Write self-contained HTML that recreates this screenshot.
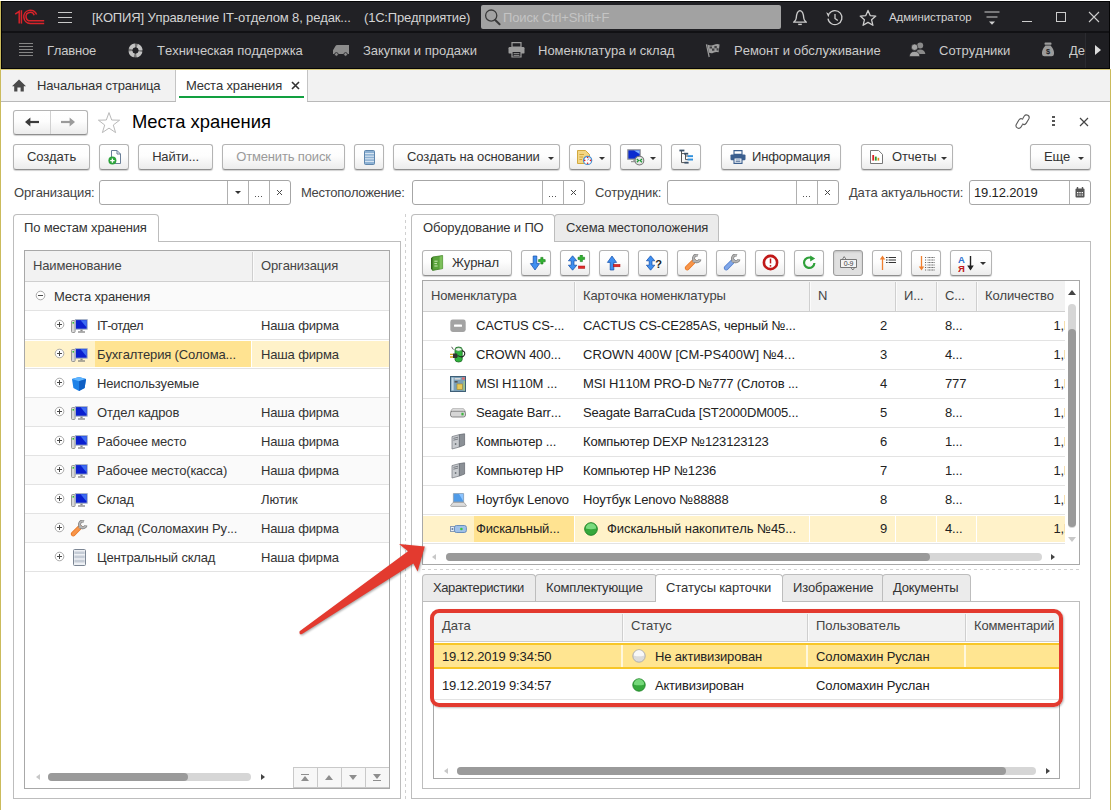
<!DOCTYPE html>
<html lang="ru"><head><meta charset="utf-8"><title>Места хранения</title>
<style>
html,body{margin:0;padding:0}
body{width:1112px;height:810px;position:relative;overflow:hidden;background:#fff;font:13px/1 "Liberation Sans",sans-serif;color:#333;font-kerning:none;letter-spacing:-.15px}
.a{position:absolute;white-space:nowrap}
.t{position:absolute;white-space:nowrap;line-height:16px;height:16px}
.b{position:absolute;box-sizing:border-box;height:26px;border:1px solid #b4b4b4;border-bottom-color:#8f8f8f;border-radius:3px;background:linear-gradient(#fff 0%,#fdfdfd 45%,#ececec 100%);box-shadow:0 1px 1px rgba(0,0,0,.18);text-align:center;line-height:24px;color:#333;white-space:nowrap}
.b.dis{color:#9a9a9a}
.b.on{background:#e0e0e0;border-color:#9c9c9c;box-shadow:inset 0 1px 2px rgba(0,0,0,.15)}
.b svg{position:absolute}
.in{position:absolute;box-sizing:border-box;height:25px;border:1px solid #a6a6a6;border-radius:3px;background:#fff}
.in i{position:absolute;top:0;bottom:0;width:1px;background:#bdbdbd}
.in span{position:absolute;top:0;line-height:23px;color:#555;text-align:center;width:20px;font-size:12px}
.dd{position:absolute;width:0;height:0;border-left:3px solid transparent;border-right:3px solid transparent;border-top:3px solid #333}
.hl{position:absolute;height:1px;background:#e3e3e3}
.vl{position:absolute;width:1px;background:#d0d0d0}
.tab{position:absolute;box-sizing:border-box;border:1px solid #bdbdbd;border-bottom:none;border-radius:4px 4px 0 0;background:#ebebeb;line-height:26px;height:27px;padding-left:10px;color:#333}
.tab.act{background:#fff;height:28px}
.pnl{position:absolute;box-sizing:border-box;border:1px solid #bdbdbd}
.hd{position:absolute;background:#f2f2f2}
.menu .t{color:#cbcbcb;letter-spacing:0}
</style></head><body>

<!-- window frame -->
<div class="a" style="left:0;top:1px;width:1px;height:809px;background:#cbbb5c"></div>
<div class="a" style="left:1110px;top:69px;width:1px;height:741px;background:#cbbb5c"></div>
<div class="a" style="left:0;top:69px;width:1111px;height:1px;background:#d6c877"></div>

<!-- title bar -->
<div class="a" style="left:1px;top:1px;width:1109px;height:68px;background:#050506"></div>
<div class="a" style="left:2px;top:2px;width:1107px;height:66px;background:#212125"></div>
<div class="a" style="left:2px;top:31px;width:1107px;height:2px;background:#111114"></div>

<!-- 1C logo -->
<svg class="a" style="left:14px;top:9px" width="31" height="16" viewBox="0 0 31 16">
 <g fill="none" stroke="#d8232a" stroke-width="1.5">
  <path d="M1.2 5.2 L5.2 2.4 V14.6"/>
  <path d="M7.4 1.2 V14.6"/>
  <path d="M22.6 5.6 A6.6 6.6 0 1 0 16.2 14.4 H30.2"/>
  <path d="M20.2 6.2 A4.2 4.2 0 1 0 16.2 11.8 H30.2"/>
 </g>
</svg>
<!-- hamburger -->
<div class="a" style="left:58px;top:12px;width:14px;height:1px;background:#c9c9c9;box-shadow:0 5px 0 #c9c9c9,0 10px 0 #c9c9c9"></div>
<div class="t" style="left:92px;top:10px;color:#d4d4d4">[КОПИЯ] Управление IT-отделом 8, редак...</div>
<div class="t" style="left:364px;top:10px;color:#d4d4d4;letter-spacing:-.2px">(1С:Предприятие)</div>
<!-- search -->
<div class="a" style="left:481px;top:5px;width:300px;height:24px;background:#a2a2a2;border-radius:2px"></div>
<svg class="a" style="left:484px;top:8px" width="18" height="18" viewBox="0 0 18 18"><circle cx="7.2" cy="7.6" r="5.6" fill="none" stroke="#3a3a3a" stroke-width="1.3"/><path d="M11.2 12 L15.6 16.2" stroke="#3a3a3a" stroke-width="2" stroke-linecap="round"/></svg>
<div class="t" style="left:503px;top:10px;color:#c4c4c4">Поиск Ctrl+Shift+F</div>
<!-- bell -->
<svg class="a" style="left:791px;top:9px" width="18" height="18" viewBox="0 0 18 18"><path d="M9 1.6 C5.6 2.2 5.4 6 5.2 9.2 C5 11.4 3.6 12.2 2.6 13.2 H15.4 C14.4 12.2 13 11.4 12.8 9.2 C12.6 6 12.4 2.2 9 1.6Z" fill="none" stroke="#cdcdcd" stroke-width="1.3" stroke-linejoin="round"/><path d="M7.2 15.4 H10.8" stroke="#cdcdcd" stroke-width="1.4"/></svg>
<!-- history -->
<svg class="a" style="left:825px;top:9px" width="19" height="18" viewBox="0 0 19 18"><path d="M4.2 4.6 A7 7 0 1 1 3 9.6" fill="none" stroke="#cdcdcd" stroke-width="1.3"/><path d="M1.2 3.2 L4.6 4.9 L3.4 8.2" fill="#cdcdcd" stroke="none"/><path d="M10 5 V9.4 L12.8 11.6" fill="none" stroke="#cdcdcd" stroke-width="1.3"/></svg>
<!-- star -->
<svg class="a" style="left:859px;top:9px" width="18" height="18" viewBox="0 0 18 18"><path d="M9 1.4 L11.2 6.6 L16.8 7.1 L12.6 10.8 L13.9 16.3 L9 13.4 L4.1 16.3 L5.4 10.8 L1.2 7.1 L6.8 6.6 Z" fill="none" stroke="#cdcdcd" stroke-width="1.3" stroke-linejoin="round"/></svg>
<div class="t" style="left:889px;top:9px;color:#d4d4d4;font-size:11.4px;letter-spacing:0">Администратор</div>
<!-- service menu -->
<svg class="a" style="left:984px;top:10px" width="16" height="16" viewBox="0 0 16 16"><path d="M0.5 2 H15.5 M2.5 7 H13.5" stroke="#cfcfcf" stroke-width="1.2"/><path d="M5 11.6 H11 L8 14.8Z" fill="#cfcfcf"/></svg>
<div class="a" style="left:1022px;top:21px;width:10px;height:1px;background:#cdcdcd"></div>
<div class="a" style="left:1056px;top:12px;width:8px;height:8px;border:1px solid #cdcdcd"></div>
<svg class="a" style="left:1088px;top:11px" width="12" height="12" viewBox="0 0 12 12"><path d="M1 1 L11 11 M11 1 L1 11" stroke="#cdcdcd" stroke-width="1.1"/></svg>


<div class="menu">
<!-- main list icon -->
<div class="a" style="left:19px;top:43px;width:14px;height:1px;background:#858585;box-shadow:0 3px 0 #858585,0 6px 0 #858585,0 9px 0 #858585,0 12px 0 #858585"></div>
<div class="t" style="left:47px;top:43px;letter-spacing:-.2px">Главное</div>
<!-- lifebuoy -->
<svg class="a" style="left:128px;top:43px" width="15" height="15" viewBox="0 0 15 15"><circle cx="7.5" cy="7.5" r="5.1" fill="none" stroke="#777" stroke-width="3.8"/><circle cx="7.5" cy="7.5" r="5.1" fill="none" stroke="#c2c2c2" stroke-width="3.8" stroke-dasharray="5.6 2.41" stroke-dashoffset="-1.2"/></svg>
<div class="t" style="left:157px;top:43px">Техническая поддержка</div>
<!-- truck -->
<svg class="a" style="left:332px;top:44px" width="18" height="13" viewBox="0 0 18 13"><path d="M5.5 1 H17 V10 H1 V6.2 L3.2 2.4 Q3.8 1 5.5 1Z" fill="#8c8c8c"/><circle cx="4.4" cy="10.4" r="1.8" fill="#8c8c8c" stroke="#202024" stroke-width=".8"/><circle cx="13.6" cy="10.4" r="1.8" fill="#8c8c8c" stroke="#202024" stroke-width=".8"/></svg>
<div class="t" style="left:363px;top:43px">Закупки и продажи</div>
<!-- printer -->
<svg class="a" style="left:508px;top:42px" width="17" height="16" viewBox="0 0 17 16"><path d="M4 0.6 H13 V5 H4Z" fill="none" stroke="#9c9c9c" stroke-width="1.2"/><rect x="0.5" y="5" width="16" height="6.6" rx="1.2" fill="#9c9c9c"/><path d="M4 9.4 H13 V15 H4Z" fill="#202024" stroke="#9c9c9c" stroke-width="1.2"/><path d="M5.6 11.6 H11.4 M5.6 13.4 H11.4" stroke="#9c9c9c" stroke-width=".9"/></svg>
<div class="t" style="left:538px;top:43px">Номенклатура и склад</div>
<!-- flag -->
<svg class="a" style="left:705px;top:43px" width="16" height="15" viewBox="0 0 16 15"><path d="M1.4 1.4 L4.2 14" stroke="#9c9c9c" stroke-width="1.2"/><path d="M2.4 1.6 Q6 3.4 9 1.8 T14.6 1.4 L13.6 9.2 Q10.6 8.6 8.4 9.8 T3.8 9.6Z" fill="#9c9c9c"/><path d="M4.6 3.4h2.4v2.2h-2.4z M9.4 3h2.4v2.2h-2.4z M7 5.6h2.4v2.2h-2.4z M11.6 5.2h2v2.2h-2z" fill="#202024" opacity=".75"/></svg>
<div class="t" style="left:734px;top:43px">Ремонт и обслуживание</div>
<!-- people -->
<svg class="a" style="left:909px;top:42px" width="17" height="15" viewBox="0 0 17 15"><circle cx="11.2" cy="3.4" r="3" fill="#8a8a8a"/><path d="M6.6 12 Q6.8 7.4 11.2 7.4 T16.4 12Z" fill="#8a8a8a"/><circle cx="5.6" cy="5.2" r="3.2" fill="#a4a4a4" stroke="#202024" stroke-width=".6"/><path d="M0.4 14.6 Q0.6 9.4 5.6 9.4 T10.8 14.6Z" fill="#a4a4a4" stroke="#202024" stroke-width=".6"/></svg>
<div class="t" style="left:939px;top:43px">Сотрудники</div>
<!-- money bag -->
<svg class="a" style="left:1041px;top:42px" width="14" height="15" viewBox="0 0 14 15"><rect x="3.6" y="0.6" width="6.8" height="2.2" rx=".6" fill="#9c9c9c"/><path d="M4.4 3.6 H9.6 Q13.4 8 13 12 Q12.8 14.2 10.6 14.2 H3.4 Q1.2 14.2 1 12 Q0.6 8 4.4 3.6Z" fill="#9c9c9c"/><text x="7" y="12.4" font-family="Liberation Sans,sans-serif" font-size="7.5" font-weight="bold" text-anchor="middle" fill="#202024">$</text></svg>
<div class="t" style="left:1069px;top:43px;width:17px;overflow:hidden">Де</div>
<div class="a" style="left:1085px;top:33px;width:23px;height:35px;background:#1e1e22;border-left:1px solid #2b2b30"></div>
<div class="a" style="left:1095px;top:45px;width:0;height:0;border-top:5px solid transparent;border-bottom:5px solid transparent;border-left:6px solid #dcdcdc"></div>
</div>


<!-- open-windows bar -->
<div class="a" style="left:1px;top:70px;width:1109px;height:31px;background:#f2f2f2"></div>
<div class="a" style="left:1px;top:101px;width:1109px;height:1px;background:#b9b9b9"></div>

<svg class="a" style="left:11px;top:78px" width="16" height="15" viewBox="0 0 16 15"><path d="M8 1.6 L15 8.2 H12.8 V13.6 H9.6 V9.6 H6.4 V13.6 H3.2 V8.2 H1Z" fill="#4a4a4a"/></svg>
<div class="t" style="left:37px;top:78px;color:#333;letter-spacing:-.15px">Начальная страница</div>
<div class="a" style="left:175px;top:70px;width:1px;height:31px;background:#c4c4c4"></div>
<div class="a" style="left:176px;top:70px;width:131px;height:32px;background:#fff"></div>
<div class="a" style="left:307px;top:70px;width:1px;height:31px;background:#c4c4c4"></div>
<div class="t" style="left:186px;top:78px;color:#333">Места хранения</div>
<svg class="a" style="left:291px;top:81px" width="9" height="9" viewBox="0 0 9 9"><path d="M1 1 L8 8 M8 1 L1 8" stroke="#333" stroke-width="1.6"/></svg>
<div class="a" style="left:179px;top:96px;width:125px;height:2px;background:#12a040"></div>



<!-- back / forward -->
<div class="b" style="left:13px;top:110px;width:75px;height:25px"></div>
<div class="a" style="left:50px;top:111px;width:1px;height:23px;background:#d0d0d0"></div>
<svg class="a" style="left:24px;top:116px" width="16" height="12" viewBox="0 0 16 12"><path d="M15 6 H4" stroke="#3a3a3a" stroke-width="2.2"/><path d="M1 6 L6.4 1.4 V10.6Z" fill="#3a3a3a"/></svg>
<svg class="a" style="left:60px;top:116px" width="16" height="12" viewBox="0 0 16 12"><path d="M1 6 H12" stroke="#9b9b9b" stroke-width="2.2"/><path d="M15 6 L9.6 1.4 V10.6Z" fill="#9b9b9b"/></svg>
<!-- favourite star -->
<svg class="a" style="left:97px;top:111px" width="24" height="23" viewBox="0 0 24 23"><path d="M12 1.6 L14.7 9 L22.6 9.2 L16.3 14 L18.6 21.6 L12 17.1 L5.4 21.6 L7.7 14 L1.4 9.2 L9.3 9Z" fill="#fff" stroke="#b9b9b9" stroke-width="1"/></svg>
<div class="a" style="left:132px;top:111px;font-size:18.4px;line-height:22px;color:#000;letter-spacing:0">Места хранения</div>
<!-- link -->
<svg class="a" style="left:1013px;top:112px" width="20" height="19" viewBox="0 0 20 19"><g transform="rotate(-14 9.6 9.6)" fill="none" stroke="#5a5a5a" stroke-width="1.1" stroke-linecap="round"><path d="M8.6 12.6 L6.6 14.6 A2.7 2.7 0 0 1 2.8 10.8 L6.4 7.2 A2.7 2.7 0 0 1 10.2 7.2"/><path d="M10.6 6.6 L12.6 4.6 A2.7 2.7 0 0 1 16.4 8.4 L12.8 12 A2.7 2.7 0 0 1 9 12"/></g></svg>
<div class="a" style="left:1052px;top:116px;width:3px;height:2px;background:#555;box-shadow:0 4px 0 #555,0 8px 0 #555"></div>
<svg class="a" style="left:1079px;top:117px" width="10" height="10" viewBox="0 0 10 10"><path d="M1 1 L9 9 M9 1 L1 9" stroke="#444" stroke-width="1.2"/></svg>


<div class="b" style="left:13px;top:144px;width:77px">Создать</div>
<div class="b" style="left:99px;top:144px;width:30px"><svg style="left:8px;top:5px" width="14" height="15" viewBox="0 0 14 15"><path d="M3.5 0.5 H9 L12.5 4 V13.5 H3.5Z" fill="#fff" stroke="#6a7f99" stroke-width="1"/><path d="M9 0.5 V4 H12.5" fill="none" stroke="#6a7f99" stroke-width="1"/><circle cx="4.4" cy="10.6" r="4" fill="#2ba33a"/><path d="M2.2 10.6 H6.6 M4.4 8.4 V12.8" stroke="#fff" stroke-width="1.4"/></svg></div>
<div class="b" style="left:138px;top:144px;width:75px">Найти...</div>
<div class="b dis" style="left:222px;top:144px;width:123px">Отменить поиск</div>
<div class="b" style="left:354px;top:144px;width:30px"><svg style="left:9px;top:5px" width="11" height="15" viewBox="0 0 11 15"><rect x="0.5" y="0.5" width="10" height="14" rx="1" fill="#8db1d3" stroke="#5f86ad"/><path d="M1 3.6 H10 M1 6.2 H10 M1 8.8 H10 M1 11.4 H10" stroke="#dfeaf5" stroke-width="1"/></svg></div>
<div class="b" style="left:393px;top:144px;width:167px;text-align:left;padding-left:13px">Создать на основании</div><div class="dd" style="left:548px;top:157px"></div>
<div class="b" style="left:569px;top:144px;width:42px"><svg style="left:7px;top:4px" width="18" height="17" viewBox="0 0 18 17"><path d="M0.5 1.5 H8.5 L12.5 5.5 V14.5 H0.5Z" fill="#f3d684" stroke="#d2a93f"/><path d="M2.4 5.5 H7 M2.4 8 H6 M2.4 10.5 H5" stroke="#c79a2f" stroke-width=".8"/><circle cx="10.6" cy="11.4" r="4.1" fill="#fff" stroke="#4a8fd0" stroke-width="1.2"/><g fill="#e02020"><circle cx="10.6" cy="8.5" r=".8"/><circle cx="10.6" cy="14.3" r=".8"/><circle cx="7.7" cy="11.4" r=".8"/><circle cx="13.5" cy="11.4" r=".8"/></g><path d="M10.6 11.4 L12 9.4" stroke="#5a8fd8" stroke-width=".9"/></svg></div><div class="dd" style="left:599px;top:157px"></div>
<div class="b" style="left:620px;top:144px;width:42px"><svg style="left:6px;top:4px" width="18" height="17" viewBox="0 0 18 17"><rect x="0.8" y="0.8" width="12.4" height="9.4" fill="#0b2bd0" stroke="#9a9a9a" stroke-width="1.2"/><path d="M7 1.4 H12.6 V5 Z" fill="#7fb1ff"/><path d="M4 12.6 H10 M7 10.4 V12.6" stroke="#9a9a9a" stroke-width="1.4"/><circle cx="12.4" cy="11.6" r="4.4" fill="#e6e6e6" stroke="#7a7a7a" stroke-width="1.1"/><path d="M9.8 10 L11.6 11.6 L9.8 13.2 M15 10 L13.2 11.6 L15 13.2" fill="none" stroke="#1f9a35" stroke-width="1.2"/></svg></div><div class="dd" style="left:650px;top:157px"></div>
<div class="b" style="left:671px;top:144px;width:30px"><svg style="left:7px;top:4px" width="15" height="16" viewBox="0 0 15 16"><path d="M2.5 2 V13.6 H6 M2.5 4.6 H6.5 V10.6 H9 M6.5 7 H9" fill="none" stroke="#555" stroke-width="1"/><rect x="0.4" y="0.6" width="5" height="1.8" fill="#3a5068"/><rect x="5" y="3.8" width="4.2" height="1.8" fill="#3a5068"/><rect x="8.6" y="6.2" width="5.4" height="1.9" fill="#2f8fdc"/><rect x="8.6" y="9.6" width="5.4" height="1.9" fill="#2f8fdc"/><rect x="5.4" y="12.8" width="4.2" height="1.8" fill="#3a5068"/></svg></div>
<div class="b" style="left:721px;top:144px;width:120px;text-align:left;padding-left:30px">Информация<svg style="left:8px;top:5px" width="16" height="14" viewBox="0 0 16 14"><path d="M4 0.6 H12 V4.4 H4Z" fill="#fff" stroke="#3b5f8f" stroke-width="1.1"/><rect x="0.5" y="4.4" width="15" height="5.8" rx="1.2" fill="#3b5f8f"/><path d="M4 8 H12 V13.4 H4Z" fill="#fff" stroke="#3b5f8f" stroke-width="1.1"/><path d="M5.6 10 H10.4 M5.6 11.6 H10.4" stroke="#3b5f8f" stroke-width=".8"/></svg></div>
<div class="b" style="left:861px;top:144px;width:92px;text-align:left;padding-left:30px">Отчеты<svg style="left:8px;top:5px" width="13" height="14" viewBox="0 0 13 14"><path d="M0.5 0.5 H8.6 L12.5 4.4 V13.5 H0.5Z" fill="#fff" stroke="#777"/><path d="M3.2 5 V10.6" stroke="#d22" stroke-width="1.8"/><path d="M5.8 6.6 V10.6" stroke="#2a9a2a" stroke-width="1.8"/><path d="M8.4 7.8 V10.6" stroke="#e08a1e" stroke-width="1.6"/></svg></div><div class="dd" style="left:941px;top:157px"></div>
<div class="b" style="left:1030px;top:144px;width:61px;text-align:left;padding-left:13px">Еще</div><div class="dd" style="left:1078px;top:157px"></div>


<div class="t" style="left:14px;top:185px;color:#444">Организация:</div>
<div class="in" style="left:99px;top:180px;width:192px"></div><div class="a" style="left:227px;top:181px;width:1px;height:23px;background:#b0b0b0"></div><div class="a" style="left:248px;top:181px;width:1px;height:23px;background:#b0b0b0"></div><div class="a" style="left:269px;top:181px;width:1px;height:23px;background:#b0b0b0"></div><div class="dd" style="left:235px;top:191px"></div><div class="a" style="left:255px;top:196px;width:1px;height:1px;background:#555;box-shadow:3px 0 0 #555,6px 0 0 #555"></div><svg class="a" style="left:276px;top:189px" width="7" height="7" viewBox="0 0 7 7"><path d="M1 1 L6 6 M6 1 L1 6" stroke="#4a4a4a" stroke-width="1"/></svg>
<div class="t" style="left:301px;top:185px;color:#444;letter-spacing:-.3px">Местоположение:</div>
<div class="in" style="left:412px;top:180px;width:173px"></div><div class="a" style="left:542px;top:181px;width:1px;height:23px;background:#b0b0b0"></div><div class="a" style="left:563px;top:181px;width:1px;height:23px;background:#b0b0b0"></div><div class="a" style="left:549px;top:196px;width:1px;height:1px;background:#555;box-shadow:3px 0 0 #555,6px 0 0 #555"></div><svg class="a" style="left:570px;top:189px" width="7" height="7" viewBox="0 0 7 7"><path d="M1 1 L6 6 M6 1 L1 6" stroke="#4a4a4a" stroke-width="1"/></svg>
<div class="t" style="left:595px;top:185px;color:#444">Сотрудник:</div>
<div class="in" style="left:667px;top:180px;width:172px"></div><div class="a" style="left:796px;top:181px;width:1px;height:23px;background:#b0b0b0"></div><div class="a" style="left:817px;top:181px;width:1px;height:23px;background:#b0b0b0"></div><div class="a" style="left:803px;top:196px;width:1px;height:1px;background:#555;box-shadow:3px 0 0 #555,6px 0 0 #555"></div><svg class="a" style="left:824px;top:189px" width="7" height="7" viewBox="0 0 7 7"><path d="M1 1 L6 6 M6 1 L1 6" stroke="#4a4a4a" stroke-width="1"/></svg>
<div class="t" style="left:849px;top:185px;color:#444;letter-spacing:-.18px">Дата актуальности:</div>
<div class="in" style="left:969px;top:180px;width:122px"></div><div class="a" style="left:1069px;top:181px;width:1px;height:23px;background:#b0b0b0"></div>
<div class="t" style="left:974px;top:185px;color:#222">19.12.2019</div>
<svg class="a" style="left:1075px;top:187px" width="10" height="11" viewBox="0 0 10 11"><rect x="0.5" y="1.5" width="9" height="9" rx="1" fill="#555"/><path d="M2.5 0 V2.4 M7.5 0 V2.4" stroke="#555" stroke-width="1.4"/><path d="M2 5 h1.4v1.2h-1.4z M4.3 5 h1.4v1.2h-1.4z M6.6 5 h1.4v1.2h-1.4z M2 7.4 h1.4v1.2h-1.4z M4.3 7.4 h1.4v1.2h-1.4z M6.6 7.4 h1.4v1.2h-1.4z" fill="#fff"/></svg>

<!-- LEFT-BEGIN -->
<div class="pnl" style="left:13px;top:241px;width:388px;height:558px"></div>
<div class="tab act" style="left:13px;top:214px;width:146px">По местам хранения</div>
<div class="pnl" style="left:24px;top:250px;width:366px;height:539px;border-color:#a8a8a8"></div>
<div class="hd" style="left:25px;top:251px;width:364px;height:30px"></div>
<div class="a" style="left:253px;top:252px;width:1px;height:29px;background:#fbfbfb"></div><div class="a" style="left:252px;top:252px;width:1px;height:29px;background:#cfcfcf"></div>
<div class="hl" style="left:25px;top:281px;width:364px;background:#cfcfcf"></div>
<div class="t" style="left:33px;top:258px;color:#444">Наименование</div>
<div class="t" style="left:261px;top:258px;color:#444">Организация</div>
<div class="a" style="left:25px;top:282px;width:364px;height:28px;background:#fafafa"></div>
<div class="hl" style="left:25px;top:310px;width:364px"></div>
<svg class="a" style="left:35px;top:290px" width="11" height="11" viewBox="0 0 11 11"><circle cx="5.5" cy="5.5" r="4.3" fill="#fff" stroke="#a0a0a0" stroke-width=".9"/><path d="M3 5.5 H8" stroke="#4a4a4a" stroke-width="1"/></svg>
<div class="t" style="left:54px;top:289px">Места хранения</div>
<div class="hl" style="left:25px;top:339px;width:364px"></div>
<svg class="a" style="left:54px;top:319px" width="11" height="11" viewBox="0 0 11 11"><circle cx="5.5" cy="5.5" r="4.3" fill="#fff" stroke="#a0a0a0" stroke-width=".9"/><path d="M3 5.5 H8 M5.5 3 V8" stroke="#4a4a4a" stroke-width="1"/></svg>
<svg class="a" style="left:71px;top:319px" width="17" height="15" viewBox="0 0 17 15"><rect x="0.5" y="1.5" width="3.6" height="12" rx="1" fill="#d9d9d9" stroke="#8c8c8c" stroke-width=".9"/><rect x="1.6" y="3" width="1.3" height="1.6" fill="#20c020"/><rect x="4.4" y="0.6" width="11.8" height="9.6" fill="#0a1fcf" stroke="#a9b4c4" stroke-width="1"/><path d="M9.6 1.2 H15.6 V8.6Z" fill="#3d6cf2"/><path d="M9.4 10.6 H11.6 V12.2 H9.4Z" fill="#8a8a8a"/><path d="M7 12.4 H14 V13.6 H7Z" fill="#7a7a7a"/></svg>
<div class="t" style="left:97px;top:318px;letter-spacing:-.7px">IT-отдел</div>
<div class="t" style="left:261px;top:318px">Наша фирма</div>
<div class="a" style="left:25px;top:341px;width:364px;height:26px;background:#fff2c9"></div>
<div class="a" style="left:95px;top:341px;width:156px;height:26px;background:#ffe391"></div>
<div class="a" style="left:251px;top:341px;width:1px;height:26px;background:#fff"></div>
<div class="hl" style="left:25px;top:368px;width:364px"></div>
<svg class="a" style="left:54px;top:348px" width="11" height="11" viewBox="0 0 11 11"><circle cx="5.5" cy="5.5" r="4.3" fill="#fff" stroke="#a0a0a0" stroke-width=".9"/><path d="M3 5.5 H8 M5.5 3 V8" stroke="#4a4a4a" stroke-width="1"/></svg>
<svg class="a" style="left:71px;top:348px" width="17" height="15" viewBox="0 0 17 15"><rect x="0.5" y="1.5" width="3.6" height="12" rx="1" fill="#d9d9d9" stroke="#8c8c8c" stroke-width=".9"/><rect x="1.6" y="3" width="1.3" height="1.6" fill="#20c020"/><rect x="4.4" y="0.6" width="11.8" height="9.6" fill="#0a1fcf" stroke="#a9b4c4" stroke-width="1"/><path d="M9.6 1.2 H15.6 V8.6Z" fill="#3d6cf2"/><path d="M9.4 10.6 H11.6 V12.2 H9.4Z" fill="#8a8a8a"/><path d="M7 12.4 H14 V13.6 H7Z" fill="#7a7a7a"/></svg>
<div class="t" style="left:97px;top:347px">Бухгалтерия (Солома...</div>
<div class="t" style="left:261px;top:347px">Наша фирма</div>
<div class="hl" style="left:25px;top:397px;width:364px"></div>
<svg class="a" style="left:54px;top:377px" width="11" height="11" viewBox="0 0 11 11"><circle cx="5.5" cy="5.5" r="4.3" fill="#fff" stroke="#a0a0a0" stroke-width=".9"/><path d="M3 5.5 H8 M5.5 3 V8" stroke="#4a4a4a" stroke-width="1"/></svg>
<svg class="a" style="left:71px;top:376px" width="16" height="16" viewBox="0 0 16 16"><path d="M1 3 L8 1 L15 3 L13.6 12 L8 15 L2.4 12Z" fill="#1e82e8"/><path d="M1 3 L8 1 L15 3 L8 5.2Z" fill="#5fb4ff"/><path d="M8 5.2 L15 3 L13.6 12 L8 15Z" fill="#0f5fc4"/></svg>
<div class="t" style="left:97px;top:376px">Неиспользуемые</div>
<div class="a" style="left:25px;top:398px;width:364px;height:28px;background:#fafafa"></div>
<div class="hl" style="left:25px;top:426px;width:364px"></div>
<svg class="a" style="left:54px;top:406px" width="11" height="11" viewBox="0 0 11 11"><circle cx="5.5" cy="5.5" r="4.3" fill="#fff" stroke="#a0a0a0" stroke-width=".9"/><path d="M3 5.5 H8 M5.5 3 V8" stroke="#4a4a4a" stroke-width="1"/></svg>
<svg class="a" style="left:71px;top:406px" width="17" height="15" viewBox="0 0 17 15"><rect x="0.5" y="1.5" width="3.6" height="12" rx="1" fill="#d9d9d9" stroke="#8c8c8c" stroke-width=".9"/><rect x="1.6" y="3" width="1.3" height="1.6" fill="#20c020"/><rect x="4.4" y="0.6" width="11.8" height="9.6" fill="#0a1fcf" stroke="#a9b4c4" stroke-width="1"/><path d="M9.6 1.2 H15.6 V8.6Z" fill="#3d6cf2"/><path d="M9.4 10.6 H11.6 V12.2 H9.4Z" fill="#8a8a8a"/><path d="M7 12.4 H14 V13.6 H7Z" fill="#7a7a7a"/></svg>
<div class="t" style="left:97px;top:405px">Отдел кадров</div>
<div class="t" style="left:261px;top:405px">Наша фирма</div>
<div class="hl" style="left:25px;top:455px;width:364px"></div>
<svg class="a" style="left:54px;top:435px" width="11" height="11" viewBox="0 0 11 11"><circle cx="5.5" cy="5.5" r="4.3" fill="#fff" stroke="#a0a0a0" stroke-width=".9"/><path d="M3 5.5 H8 M5.5 3 V8" stroke="#4a4a4a" stroke-width="1"/></svg>
<svg class="a" style="left:71px;top:435px" width="17" height="15" viewBox="0 0 17 15"><rect x="0.5" y="1.5" width="3.6" height="12" rx="1" fill="#d9d9d9" stroke="#8c8c8c" stroke-width=".9"/><rect x="1.6" y="3" width="1.3" height="1.6" fill="#20c020"/><rect x="4.4" y="0.6" width="11.8" height="9.6" fill="#0a1fcf" stroke="#a9b4c4" stroke-width="1"/><path d="M9.6 1.2 H15.6 V8.6Z" fill="#3d6cf2"/><path d="M9.4 10.6 H11.6 V12.2 H9.4Z" fill="#8a8a8a"/><path d="M7 12.4 H14 V13.6 H7Z" fill="#7a7a7a"/></svg>
<div class="t" style="left:97px;top:434px">Рабочее место</div>
<div class="t" style="left:261px;top:434px">Наша фирма</div>
<div class="a" style="left:25px;top:456px;width:364px;height:28px;background:#fafafa"></div>
<div class="hl" style="left:25px;top:484px;width:364px"></div>
<svg class="a" style="left:54px;top:464px" width="11" height="11" viewBox="0 0 11 11"><circle cx="5.5" cy="5.5" r="4.3" fill="#fff" stroke="#a0a0a0" stroke-width=".9"/><path d="M3 5.5 H8 M5.5 3 V8" stroke="#4a4a4a" stroke-width="1"/></svg>
<svg class="a" style="left:71px;top:464px" width="17" height="15" viewBox="0 0 17 15"><rect x="0.5" y="1.5" width="3.6" height="12" rx="1" fill="#d9d9d9" stroke="#8c8c8c" stroke-width=".9"/><rect x="1.6" y="3" width="1.3" height="1.6" fill="#20c020"/><rect x="4.4" y="0.6" width="11.8" height="9.6" fill="#0a1fcf" stroke="#a9b4c4" stroke-width="1"/><path d="M9.6 1.2 H15.6 V8.6Z" fill="#3d6cf2"/><path d="M9.4 10.6 H11.6 V12.2 H9.4Z" fill="#8a8a8a"/><path d="M7 12.4 H14 V13.6 H7Z" fill="#7a7a7a"/></svg>
<div class="t" style="left:97px;top:463px">Рабочее место(касса)</div>
<div class="t" style="left:261px;top:463px">Наша фирма</div>
<div class="hl" style="left:25px;top:513px;width:364px"></div>
<svg class="a" style="left:54px;top:493px" width="11" height="11" viewBox="0 0 11 11"><circle cx="5.5" cy="5.5" r="4.3" fill="#fff" stroke="#a0a0a0" stroke-width=".9"/><path d="M3 5.5 H8 M5.5 3 V8" stroke="#4a4a4a" stroke-width="1"/></svg>
<svg class="a" style="left:71px;top:493px" width="17" height="15" viewBox="0 0 17 15"><rect x="0.5" y="1.5" width="3.6" height="12" rx="1" fill="#d9d9d9" stroke="#8c8c8c" stroke-width=".9"/><rect x="1.6" y="3" width="1.3" height="1.6" fill="#20c020"/><rect x="4.4" y="0.6" width="11.8" height="9.6" fill="#0a1fcf" stroke="#a9b4c4" stroke-width="1"/><path d="M9.6 1.2 H15.6 V8.6Z" fill="#3d6cf2"/><path d="M9.4 10.6 H11.6 V12.2 H9.4Z" fill="#8a8a8a"/><path d="M7 12.4 H14 V13.6 H7Z" fill="#7a7a7a"/></svg>
<div class="t" style="left:97px;top:492px">Склад</div>
<div class="t" style="left:261px;top:492px">Лютик</div>
<div class="a" style="left:25px;top:514px;width:364px;height:28px;background:#fafafa"></div>
<div class="hl" style="left:25px;top:542px;width:364px"></div>
<svg class="a" style="left:54px;top:522px" width="11" height="11" viewBox="0 0 11 11"><circle cx="5.5" cy="5.5" r="4.3" fill="#fff" stroke="#a0a0a0" stroke-width=".9"/><path d="M3 5.5 H8 M5.5 3 V8" stroke="#4a4a4a" stroke-width="1"/></svg>
<svg class="a" style="left:70px;top:520px" width="18" height="17" viewBox="0 0 18 17"><path d="M3.2 14 L10 7.2" stroke="#e8741e" stroke-width="4.6" stroke-linecap="round"/><path d="M3.2 14 L10 7.2" stroke="#f7954a" stroke-width="3.2" stroke-linecap="round"/><path d="M9.2 8 L11.4 5.8" stroke="#8a8a8a" stroke-width="3"/><path d="M13.9 1.3 A3.3 3.3 0 1 0 16 5.3" fill="none" stroke="#7d7d7d" stroke-width="3"/><path d="M13.9 1.3 A3.3 3.3 0 1 0 16 5.3" fill="none" stroke="#b4b4b4" stroke-width="1.7"/><path d="M9.4 7.8 L11.2 6" stroke="#b4b4b4" stroke-width="1.7"/></svg>
<div class="t" style="left:97px;top:521px">Склад (Соломахин Ру...</div>
<div class="t" style="left:261px;top:521px">Наша фирма</div>
<div class="hl" style="left:25px;top:571px;width:364px"></div>
<svg class="a" style="left:54px;top:551px" width="11" height="11" viewBox="0 0 11 11"><circle cx="5.5" cy="5.5" r="4.3" fill="#fff" stroke="#a0a0a0" stroke-width=".9"/><path d="M3 5.5 H8 M5.5 3 V8" stroke="#4a4a4a" stroke-width="1"/></svg>
<svg class="a" style="left:73px;top:549px" width="13" height="17" viewBox="0 0 13 17"><rect x="0.5" y="0.5" width="12" height="16" rx="1" fill="#eef1f5" stroke="#7c8694"/><path d="M1.4 2.4 H11.6 V5 H1.4Z M1.4 6.6 H11.6 V9.2 H1.4Z M1.4 10.8 H11.6 V13.4 H1.4Z" fill="#c5ccd6"/></svg>
<div class="t" style="left:97px;top:550px">Центральный склад</div>
<div class="t" style="left:261px;top:550px">Наша фирма</div>
<div class="a" style="left:36px;top:774px;width:0;height:0;border-top:3px solid transparent;border-bottom:3px solid transparent;border-right:4px solid #c8c8c8"></div>
<div class="a" style="left:48px;top:773px;width:203px;height:8px;border-radius:4px;background:#d6d6d6"></div>
<div class="a" style="left:48px;top:773px;width:140px;height:8px;border-radius:4px;background:#9a9a9a"></div>
<div class="a" style="left:261px;top:774px;width:0;height:0;border-top:3px solid transparent;border-bottom:3px solid transparent;border-left:4px solid #444"></div>
<div class="a" style="left:293px;top:767px;width:24px;height:21px;box-sizing:border-box;border:1px solid #c9c9c9;border-right:none;background:#f7f7f7"></div>
<div class="a" style="left:317px;top:767px;width:24px;height:21px;box-sizing:border-box;border:1px solid #c9c9c9;border-right:none;background:#f7f7f7"></div>
<div class="a" style="left:341px;top:767px;width:24px;height:21px;box-sizing:border-box;border:1px solid #c9c9c9;border-right:none;background:#f7f7f7"></div>
<div class="a" style="left:365px;top:767px;width:24px;height:21px;box-sizing:border-box;border:1px solid #c9c9c9;border-right:none;background:#f7f7f7"></div>
<div class="a" style="left:301px;top:774px;width:8px;height:1px;background:#8e8e8e"></div><div class="a" style="left:301px;top:776px;width:0;height:0;border-left:4px solid transparent;border-right:4px solid transparent;border-bottom:5px solid #8e8e8e"></div>
<div class="a" style="left:325px;top:775px;width:0;height:0;border-left:4px solid transparent;border-right:4px solid transparent;border-bottom:5px solid #8e8e8e"></div>
<div class="a" style="left:349px;top:775px;width:0;height:0;border-left:4px solid transparent;border-right:4px solid transparent;border-top:5px solid #8e8e8e"></div>
<div class="a" style="left:373px;top:774px;width:0;height:0;border-left:4px solid transparent;border-right:4px solid transparent;border-top:5px solid #8e8e8e"></div><div class="a" style="left:373px;top:780px;width:8px;height:1px;background:#8e8e8e"></div>
<!-- LEFT-END -->
<!-- RIGHT-BEGIN -->
<div class="pnl" style="left:411px;top:241px;width:680px;height:558px"></div>
<div class="tab" style="left:554px;top:214px;width:165px;padding-left:11px">Схема местоположения</div>
<div class="tab act" style="left:411px;top:214px;width:144px;padding-left:11px">Оборудование и ПО</div>
<div class="a" style="left:405px;top:214px;width:1px;height:585px;background:repeating-linear-gradient(180deg,#d0d0d0 0 3px,transparent 3px 6px)"></div>
<div class="b" style="left:422px;top:250px;width:90px;text-align:left;padding-left:29px">Журнал<svg style="left:7px;top:4px" width="15" height="16" viewBox="0 0 15 16"><path d="M2.6 2 L12.6 0.6 V13.6 L2.6 15.4Z" fill="#5aa43a" stroke="#3d7f22" stroke-width=".8"/><path d="M1 3 L2.6 2 V15.4 L1 14Z" fill="#2f6a18"/><path d="M4.4 6.2 H7.6 M4.4 8.6 H7 M4.4 11 H7.6" stroke="#d6f0c4" stroke-width=".9"/><path d="M9.6 1.4 L12.6 0.9 V13.4 L9.6 13.9Z" fill="#8ccc6a" opacity=".7"/></svg></div>
<div class="b " style="left:521px;top:250px;width:30px"><svg style="left:7px;top:4px" width="19" height="16" viewBox="0 0 19 16"><path d="M4.2 1 H7.8 V8.6 H10.6 L6 15 L1.4 8.6 H4.2Z" fill="#3f8ff0" stroke="#0f4aa8" stroke-width=".7"/><path d="M9.6 4.6h2.2v-2.2h2.2v2.2h2.2v2.2h-2.2v2.2h-2.2v-2.2h-2.2z" fill="#32b432" stroke="#1a7a1a" stroke-width=".6"/></svg></div>
<div class="b " style="left:560px;top:250px;width:30px"><svg style="left:6px;top:4px" width="20" height="17" viewBox="0 0 20 17"><path d="M4.2 5.8 H1.4 L5.6 0.8 L9.8 5.8 H7 V10.2 H9.8 L5.6 15.2 L1.4 10.2 H4.2Z" fill="#3f8ff0" stroke="#0f4aa8" stroke-width=".7"/><path d="M11 2.2h2.2v-2.2h2.2v2.2h2.2v2.2h-2.2v2.2h-2.2v-2.2h-2.2z" fill="#32b432" stroke="#1a7a1a" stroke-width=".6"/><rect x="11.4" y="11" width="6.4" height="2.4" fill="#e02a2a" stroke="#a81010" stroke-width=".5"/></svg></div>
<div class="b " style="left:599px;top:250px;width:30px"><svg style="left:6px;top:4px" width="16" height="16" viewBox="0 0 16 16"><path d="M4.2 15 H7.8 V7.4 H10.6 L6 1 L1.4 7.4 H4.2Z" fill="#3f8ff0" stroke="#0f4aa8" stroke-width=".7"/><rect x="7.6" y="9.4" width="6.4" height="2.4" fill="#e02a2a" stroke="#a81010" stroke-width=".5"/></svg></div>
<div class="b " style="left:638px;top:250px;width:30px"><svg style="left:6px;top:4px" width="17" height="16" viewBox="0 0 17 16"><path d="M4.2 5.8 H1.4 L5.6 0.8 L9.8 5.8 H7 V10.2 H9.8 L5.6 15.2 L1.4 10.2 H4.2Z" fill="#3f8ff0" stroke="#0f4aa8" stroke-width=".7"/><text x="13.6" y="13.4" font-family="Liberation Sans,sans-serif" font-size="11" font-weight="bold" text-anchor="middle" fill="#222">?</text></svg></div>
<div class="b " style="left:677px;top:250px;width:30px"><svg style="left:6px;top:3px" width="18" height="17" viewBox="0 0 18 17"><path d="M3.2 14 L10 7.2" stroke="#e8741e" stroke-width="4.6" stroke-linecap="round"/><path d="M3.2 14 L10 7.2" stroke="#f7954a" stroke-width="3.2" stroke-linecap="round"/><path d="M9.2 8 L11.4 5.8" stroke="#8a8a8a" stroke-width="3"/><path d="M13.9 1.3 A3.3 3.3 0 1 0 16 5.3" fill="none" stroke="#7d7d7d" stroke-width="3"/><path d="M13.9 1.3 A3.3 3.3 0 1 0 16 5.3" fill="none" stroke="#b4b4b4" stroke-width="1.7"/><path d="M9.4 7.8 L11.2 6" stroke="#b4b4b4" stroke-width="1.7"/></svg></div>
<div class="b " style="left:716px;top:250px;width:30px"><svg style="left:6px;top:3px" width="18" height="17" viewBox="0 0 18 17"><path d="M3.2 14 L10 7.2" stroke="#4f7ccc" stroke-width="4.6" stroke-linecap="round"/><path d="M3.2 14 L10 7.2" stroke="#7fa6e8" stroke-width="3.2" stroke-linecap="round"/><path d="M9.2 8 L11.4 5.8" stroke="#8a8a8a" stroke-width="3"/><path d="M13.9 1.3 A3.3 3.3 0 1 0 16 5.3" fill="none" stroke="#7d7d7d" stroke-width="3"/><path d="M13.9 1.3 A3.3 3.3 0 1 0 16 5.3" fill="none" stroke="#b4b4b4" stroke-width="1.7"/><path d="M9.4 7.8 L11.2 6" stroke="#b4b4b4" stroke-width="1.7"/></svg></div>
<div class="b " style="left:755px;top:250px;width:30px"><svg style="left:6px;top:3px" width="17" height="17" viewBox="0 0 17 17"><circle cx="8.5" cy="8.5" r="6.6" fill="#fff" stroke="#c01818" stroke-width="2.6"/><path d="M8.5 4.6 V9.4" stroke="#c01818" stroke-width="1.5"/><circle cx="8.5" cy="11.8" r=".9" fill="#c01818"/></svg></div>
<div class="b " style="left:794px;top:250px;width:30px"><svg style="left:7px;top:4px" width="15" height="15" viewBox="0 0 15 15"><path d="M12.4 8 A5.2 5.2 0 1 1 9.4 3" fill="none" stroke="#2fa03a" stroke-width="2.2"/><path d="M8.2 0.4 L13.2 3.6 L8.2 6.6Z" fill="#2fa03a"/></svg></div>
<div class="b on" style="left:833px;top:250px;width:30px"><svg style="left:5px;top:4px" width="19" height="16" viewBox="0 0 19 16"><path d="M1.5 4.5 H17.5 V12.5 H1.5Z M3.4 4.4 L5.2 1.6 L7 4.4 M12 12.6 L13.8 15 L15.6 12.6" fill="#f4f4f4" stroke="#6a6a6a" stroke-width=".9"/><text x="9.5" y="11.2" font-family="Liberation Sans,sans-serif" font-size="7" text-anchor="middle" fill="#444">0-9</text></svg></div>
<div class="b " style="left:872px;top:250px;width:30px"><svg style="left:6px;top:4px" width="18" height="16" viewBox="0 0 18 16"><path d="M3.5 15 V3" stroke="#f08030" stroke-width="1.3"/><path d="M0.8 4.6 L3.5 0.6 L6.2 4.6Z" fill="#f08030"/><path d="M7 2.5 h1.6 M9.6 2.5 H17 M7 5 h1.6 M9.6 5 H17 M7 7.5 h1.6 M9.6 7.5 H17" stroke="#333" stroke-width="1"/></svg></div>
<div class="b " style="left:911px;top:250px;width:30px"><svg style="left:6px;top:4px" width="18" height="16" viewBox="0 0 18 16"><path d="M3.5 1 V13" stroke="#f08030" stroke-width="1.3"/><path d="M0.8 11.4 L3.5 15.4 L6.2 11.4Z" fill="#f08030"/><path d="M7 2.5 h1.6 M9.6 2.5 H17 M7 5 h1.6 M9.6 5 H17 M7 7.5 h1.6 M9.6 7.5 H17 M7 10 h1.6 M9.6 10 H17 M7 12.5 h1.6 M9.6 12.5 H17 M7 15 h1.6 M9.6 15 H17" stroke="#555" stroke-width=".9" stroke-dasharray="1 .5"/></svg></div>
<div class="b " style="left:950px;top:250px;width:42px"><svg style="left:7px;top:3px" width="20" height="19" viewBox="0 0 20 19"><text x="0" y="8.6" font-family="Liberation Sans,sans-serif" font-size="9.5" font-weight="bold" fill="#2a6fd0">А</text><text x="0" y="17.6" font-family="Liberation Sans,sans-serif" font-size="9.5" font-weight="bold" fill="#c01818">Я</text><path d="M12.5 2 V15" stroke="#222" stroke-width="1.4"/><path d="M9.2 11.6 L12.5 16.4 L15.8 11.6Z" fill="#222"/></svg></div>
<div class="dd" style="left:980px;top:262px"></div>
<div class="pnl" style="left:422px;top:280px;width:658px;height:285px;border-color:#a8a8a8"></div>
<div class="hd" style="left:423px;top:281px;width:642px;height:30px"></div>
<div class="hl" style="left:423px;top:311px;width:642px;background:#cfcfcf"></div>
<div class="a" style="left:575px;top:282px;width:1px;height:29px;background:#fbfbfb"></div><div class="a" style="left:574px;top:282px;width:1px;height:29px;background:#cfcfcf"></div>
<div class="a" style="left:810px;top:282px;width:1px;height:29px;background:#fbfbfb"></div><div class="a" style="left:809px;top:282px;width:1px;height:29px;background:#cfcfcf"></div>
<div class="a" style="left:896px;top:282px;width:1px;height:29px;background:#fbfbfb"></div><div class="a" style="left:895px;top:282px;width:1px;height:29px;background:#cfcfcf"></div>
<div class="a" style="left:937px;top:282px;width:1px;height:29px;background:#fbfbfb"></div><div class="a" style="left:936px;top:282px;width:1px;height:29px;background:#cfcfcf"></div>
<div class="a" style="left:977px;top:282px;width:1px;height:29px;background:#fbfbfb"></div><div class="a" style="left:976px;top:282px;width:1px;height:29px;background:#cfcfcf"></div>
<div class="t" style="left:431px;top:288px;color:#444">Номенклатура</div>
<div class="t" style="left:583px;top:288px;color:#444">Карточка номенклатуры</div>
<div class="t" style="left:818px;top:288px;color:#444">N</div>
<div class="t" style="left:904px;top:288px;color:#444">И...</div>
<div class="t" style="left:945px;top:288px;color:#444">С...</div>
<div class="t" style="left:985px;top:288px;color:#444">Количество</div>
<div class="hl" style="left:423px;top:340px;width:642px"></div>
<svg class="a" style="left:450px;top:319px" width="16" height="14" viewBox="0 0 16 14"><rect x="0.3" y="0.6" width="15.4" height="12.4" rx="2.4" fill="#a3a3a3"/><rect x="4" y="5.6" width="8" height="2.2" rx=".6" fill="#fff"/></svg>
<div class="t" style="left:476px;top:318px;color:#222">CACTUS CS-...</div>
<div class="t" style="left:583px;top:318px;color:#222">CACTUS CS-CE285AS, черный №...</div>
<div class="t" style="left:860px;width:27px;text-align:right;top:318px;color:#222">2</div>
<div class="t" style="left:945px;top:318px;color:#222">8...</div>
<div class="t" style="left:1041px;width:23px;text-align:right;top:318px;color:#222">1,</div>
<div class="a" style="left:1064px;top:321px;width:1px;height:9px;background:#f6dfae"></div>
<div class="hl" style="left:423px;top:369px;width:642px"></div>
<svg class="a" style="left:449px;top:346px" width="18" height="17" viewBox="0 0 18 17"><path d="M6 3.4 Q6 1 9.6 1 T13.2 3.4 V13.6 Q13.2 16 9.6 16 T6 13.6Z" fill="#2fb43c" stroke="#1a6a22" stroke-width=".8"/><ellipse cx="9.6" cy="3.4" rx="3.2" ry="1.8" fill="#eef7ee" stroke="#1a6a22" stroke-width=".6"/><path d="M1 8.4 H4 M1 11 H4" stroke="#d9a520" stroke-width="1.3"/><path d="M4 7.4 H8 Q9.6 9.7 8 12 H4Z" fill="#333"/><path d="M9 9.6 Q14 12.6 15.6 8.6 Q16.4 5.4 13 4.6" fill="none" stroke="#222" stroke-width="1.1"/><path d="M2.6 0.8 L4.4 3.6" stroke="#333" stroke-width=".8"/></svg>
<div class="t" style="left:476px;top:347px;color:#222">CROWN 400...</div>
<div class="t" style="left:583px;top:347px;color:#222;letter-spacing:.06px">CROWN 400W [CM-PS400W] №4...</div>
<div class="t" style="left:860px;width:27px;text-align:right;top:347px;color:#222">3</div>
<div class="t" style="left:945px;top:347px;color:#222">4...</div>
<div class="t" style="left:1041px;width:23px;text-align:right;top:347px;color:#222">1,</div>
<div class="a" style="left:1064px;top:350px;width:1px;height:9px;background:#f6dfae"></div>
<div class="hl" style="left:423px;top:398px;width:642px"></div>
<svg class="a" style="left:450px;top:376px" width="16" height="16" viewBox="0 0 16 16"><rect x="0.5" y="0.5" width="15" height="15" fill="#7aa0b8" stroke="#3f5f78"/><rect x="1.6" y="1.6" width="2" height="12.8" fill="#c9dbe6"/><rect x="7" y="8" width="5.4" height="5.4" fill="#e8c95a" stroke="#a98a1e" stroke-width=".6"/><rect x="4.6" y="2" width="6" height="1.6" fill="#d8d8d8"/><rect x="12" y="1.4" width="2.8" height="2.2" fill="#e06a6a"/><rect x="13.4" y="5" width="1.6" height="9.6" fill="#9fc48a"/><rect x="4.6" y="5" width="3" height="1.6" fill="#555"/></svg>
<div class="t" style="left:476px;top:376px;color:#222">MSI H110M ...</div>
<div class="t" style="left:583px;top:376px;color:#222">MSI H110M PRO-D №777 (Слотов ...</div>
<div class="t" style="left:860px;width:27px;text-align:right;top:376px;color:#222">4</div>
<div class="t" style="left:945px;top:376px;color:#222">777</div>
<div class="t" style="left:1041px;width:23px;text-align:right;top:376px;color:#222">1,</div>
<div class="a" style="left:1064px;top:379px;width:1px;height:9px;background:#f6dfae"></div>
<div class="hl" style="left:423px;top:427px;width:642px"></div>
<svg class="a" style="left:450px;top:408px" width="16" height="10" viewBox="0 0 16 10"><path d="M2.4 0.8 H13.6 L15.4 3.4 H0.6Z" fill="#f1f1f1" stroke="#8a8a8a" stroke-width=".7"/><rect x="0.5" y="3.2" width="15" height="5.8" rx="2" fill="#d6d6d6" stroke="#7a7a7a" stroke-width=".9"/><rect x="11.4" y="4.8" width="2.2" height="2.6" fill="#3cb43c"/></svg>
<div class="t" style="left:476px;top:405px;color:#222">Seagate Barr...</div>
<div class="t" style="left:583px;top:405px;color:#222">Seagate BarraCuda [ST2000DM005...</div>
<div class="t" style="left:860px;width:27px;text-align:right;top:405px;color:#222">5</div>
<div class="t" style="left:945px;top:405px;color:#222">8...</div>
<div class="t" style="left:1041px;width:23px;text-align:right;top:405px;color:#222">1,</div>
<div class="a" style="left:1064px;top:408px;width:1px;height:9px;background:#f6dfae"></div>
<div class="hl" style="left:423px;top:456px;width:642px"></div>
<svg class="a" style="left:451px;top:433px" width="15" height="17" viewBox="0 0 15 17"><path d="M1 3.6 L8.4 1.6 V14 L1 16Z" fill="#c8cbcf" stroke="#7d8288" stroke-width=".8"/><path d="M8.4 1.6 L13.6 0.8 V12 L8.4 14Z" fill="#8b9096" stroke="#6a6f75" stroke-width=".8"/><path d="M2.4 5.4 L7 4.2 M2.4 7.2 L7 6" stroke="#6f747a" stroke-width=".9"/><circle cx="4.6" cy="11" r=".9" fill="#6f747a"/></svg>
<div class="t" style="left:476px;top:434px;color:#222">Компьютер ...</div>
<div class="t" style="left:583px;top:434px;color:#222">Компьютер DEXP №123123123</div>
<div class="t" style="left:860px;width:27px;text-align:right;top:434px;color:#222">6</div>
<div class="t" style="left:945px;top:434px;color:#222">1...</div>
<div class="t" style="left:1041px;width:23px;text-align:right;top:434px;color:#222">1,</div>
<div class="a" style="left:1064px;top:437px;width:1px;height:9px;background:#f6dfae"></div>
<div class="hl" style="left:423px;top:485px;width:642px"></div>
<svg class="a" style="left:451px;top:462px" width="15" height="17" viewBox="0 0 15 17"><path d="M1 3.6 L8.4 1.6 V14 L1 16Z" fill="#c8cbcf" stroke="#7d8288" stroke-width=".8"/><path d="M8.4 1.6 L13.6 0.8 V12 L8.4 14Z" fill="#8b9096" stroke="#6a6f75" stroke-width=".8"/><path d="M2.4 5.4 L7 4.2 M2.4 7.2 L7 6" stroke="#6f747a" stroke-width=".9"/><circle cx="4.6" cy="11" r=".9" fill="#6f747a"/></svg>
<div class="t" style="left:476px;top:463px;color:#222">Компьютер HP</div>
<div class="t" style="left:583px;top:463px;color:#222">Компьютер HP №1236</div>
<div class="t" style="left:860px;width:27px;text-align:right;top:463px;color:#222">7</div>
<div class="t" style="left:945px;top:463px;color:#222">1...</div>
<div class="t" style="left:1041px;width:23px;text-align:right;top:463px;color:#222">1,</div>
<div class="a" style="left:1064px;top:466px;width:1px;height:9px;background:#f6dfae"></div>
<div class="hl" style="left:423px;top:514px;width:642px"></div>
<svg class="a" style="left:450px;top:493px" width="17" height="14" viewBox="0 0 17 14"><path d="M3.4 0.6 H13.6 V9 H3.4Z" fill="#4f9be8" stroke="#8aa0b8" stroke-width=".9"/><path d="M9 1 H13.2 V8Z" fill="#8cc4ff"/><path d="M3 9.4 H14 L16.4 12.6 Q16.4 13.4 15.6 13.4 H1.4 Q0.6 13.4 0.6 12.6Z" fill="#dcdcdc" stroke="#8f8f8f" stroke-width=".7"/></svg>
<div class="t" style="left:476px;top:492px;color:#222">Ноутбук Lenovo</div>
<div class="t" style="left:583px;top:492px;color:#222">Ноутбук Lenovo №88888</div>
<div class="t" style="left:860px;width:27px;text-align:right;top:492px;color:#222">8</div>
<div class="t" style="left:945px;top:492px;color:#222">8...</div>
<div class="t" style="left:1041px;width:23px;text-align:right;top:492px;color:#222">1,</div>
<div class="a" style="left:1064px;top:495px;width:1px;height:9px;background:#f6dfae"></div>
<div class="a" style="left:423px;top:516px;width:642px;height:26px;background:#fff2c9"></div>
<div class="a" style="left:474px;top:516px;width:100px;height:26px;background:#ffe391"></div>
<div class="a" style="left:574px;top:516px;width:1px;height:26px;background:#fff"></div>
<div class="a" style="left:809px;top:516px;width:1px;height:26px;background:#fff"></div>
<div class="a" style="left:895px;top:516px;width:1px;height:26px;background:#fff"></div>
<div class="a" style="left:936px;top:516px;width:1px;height:26px;background:#fff"></div>
<div class="a" style="left:976px;top:516px;width:1px;height:26px;background:#fff"></div>
<div class="hl" style="left:423px;top:543px;width:642px"></div>
<svg class="a" style="left:450px;top:525px" width="17" height="8" viewBox="0 0 17 8"><rect x="0.5" y="1.6" width="4" height="4.8" fill="#e8eef6" stroke="#6f86a8" stroke-width=".8"/><rect x="1.6" y="3" width="1.6" height="2" fill="#6f86a8"/><rect x="4.4" y="0.5" width="12" height="7" rx="2" fill="#9fc0e8" stroke="#5f86b8" stroke-width=".9"/><circle cx="11.4" cy="4" r="1.3" fill="#3cc43c"/></svg>
<div class="t" style="left:476px;top:521px;color:#222">Фискальный...</div>
<svg class="a" style="left:584px;top:522px" width="14" height="14" viewBox="0 0 14 14"><circle cx="7" cy="7" r="6.3" fill="#36a83c" stroke="#1f8428" stroke-width="1"/><path d="M1.7 6.6 A5.3 5.3 0 0 1 12.3 6.6 Q7 8 1.7 6.6Z" fill="#86e489" opacity=".85"/></svg>
<div class="t" style="left:607px;top:521px;color:#222;letter-spacing:-.05px">Фискальный накопитель №45...</div>
<div class="t" style="left:860px;width:27px;text-align:right;top:521px;color:#222">9</div>
<div class="t" style="left:945px;top:521px;color:#222">4...</div>
<div class="t" style="left:1041px;width:23px;text-align:right;top:521px;color:#222">1,</div>
<div class="a" style="left:1064px;top:524px;width:1px;height:9px;background:#f6dfae"></div>
<div class="a" style="left:1065px;top:281px;width:14px;height:263px;background:#fff"></div>
<div class="a" style="left:1068px;top:290px;width:0;height:0;border-left:4px solid transparent;border-right:4px solid transparent;border-bottom:5px solid #444"></div>
<div class="a" style="left:1068px;top:304px;width:8px;height:224px;border-radius:4px;background:#d6d6d6"></div>
<div class="a" style="left:1068px;top:329px;width:8px;height:198px;border-radius:4px;background:#9a9a9a"></div>
<div class="a" style="left:1068px;top:537px;width:0;height:0;border-left:4px solid transparent;border-right:4px solid transparent;border-top:5px solid #c8c8c8"></div>
<div class="a" style="left:432px;top:554px;width:0;height:0;border-top:3px solid transparent;border-bottom:3px solid transparent;border-right:4px solid #c8c8c8"></div>
<div class="a" style="left:446px;top:553px;width:596px;height:8px;border-radius:4px;background:#d6d6d6"></div>
<div class="a" style="left:446px;top:553px;width:484px;height:8px;border-radius:4px;background:#9a9a9a"></div>
<div class="a" style="left:1051px;top:554px;width:0;height:0;border-top:3px solid transparent;border-bottom:3px solid transparent;border-left:4px solid #444"></div>
<div class="a" style="left:422px;top:569px;width:658px;height:1px;background:repeating-linear-gradient(90deg,#d0d0d0 0 3px,transparent 3px 6px)"></div>
<!-- RIGHT-END -->
<!-- BOTTOM-BEGIN -->
<div class="pnl" style="left:422px;top:601px;width:658px;height:188px"></div>
<div class="tab" style="left:422px;top:574px;width:114px;padding-left:10px;letter-spacing:-.4px">Характеристики</div>
<div class="tab" style="left:535px;top:574px;width:122px;padding-left:10px">Комплектующие</div>
<div class="tab" style="left:782px;top:574px;width:102px;padding-left:10px">Изображение</div>
<div class="tab" style="left:882px;top:574px;width:89px;padding-left:10px">Документы</div>
<div class="tab act" style="left:655px;top:574px;width:128px;padding-left:10px">Статусы карточки</div>
<div class="pnl" style="left:433px;top:612px;width:627px;height:167px;border-color:#a8a8a8"></div>
<div class="hd" style="left:434px;top:613px;width:625px;height:28px"></div>
<div class="hl" style="left:434px;top:641px;width:625px;background:#cfcfcf"></div>
<div class="a" style="left:623px;top:614px;width:1px;height:27px;background:#fbfbfb"></div><div class="a" style="left:622px;top:614px;width:1px;height:27px;background:#cfcfcf"></div>
<div class="a" style="left:808px;top:614px;width:1px;height:27px;background:#fbfbfb"></div><div class="a" style="left:807px;top:614px;width:1px;height:27px;background:#cfcfcf"></div>
<div class="a" style="left:966px;top:614px;width:1px;height:27px;background:#fbfbfb"></div><div class="a" style="left:965px;top:614px;width:1px;height:27px;background:#cfcfcf"></div>
<div class="t" style="left:442px;top:618px;color:#444">Дата</div>
<div class="t" style="left:631px;top:618px;color:#444">Статус</div>
<div class="t" style="left:816px;top:618px;color:#444">Пользователь</div>
<div class="t" style="left:974px;top:618px;color:#444">Комментарий</div>
<div class="a" style="left:434px;top:643px;width:625px;height:26px;background:#ffe591;box-shadow:inset 0 2px 0 #f7c628,inset 0 -2px 0 #f7c628"></div>
<div class="a" style="left:621px;top:645px;width:2px;height:22px;background:#fff7dc"></div>
<div class="a" style="left:806px;top:645px;width:2px;height:22px;background:#fff7dc"></div>
<div class="a" style="left:964px;top:645px;width:2px;height:22px;background:#fff7dc"></div>
<div class="hl" style="left:434px;top:699px;width:625px"></div>
<div class="t" style="left:442px;top:649px;color:#222">19.12.2019 9:34:50</div>
<svg class="a" style="left:632px;top:649px" width="14" height="14" viewBox="0 0 14 14"><circle cx="7" cy="7" r="6.2" fill="#dcdcdc" stroke="#a9a9a9" stroke-width=".9"/><path d="M1.7 6.4 A5.3 5.3 0 0 1 12.3 6.4 Q7 8.2 1.7 6.4Z" fill="#ffffff" opacity=".8"/></svg>
<div class="t" style="left:655px;top:649px;color:#222">Не активизирован</div>
<div class="t" style="left:816px;top:649px;color:#222">Соломахин Руслан</div>
<div class="t" style="left:442px;top:678px;color:#222">19.12.2019 9:34:57</div>
<svg class="a" style="left:632px;top:678px" width="14" height="14" viewBox="0 0 14 14"><circle cx="7" cy="7" r="6.2" fill="#36a83c" stroke="#1f8428" stroke-width=".9"/><path d="M1.7 6.4 A5.3 5.3 0 0 1 12.3 6.4 Q7 8.2 1.7 6.4Z" fill="#86e489" opacity=".8"/></svg>
<div class="t" style="left:655px;top:678px;color:#222">Активизирован</div>
<div class="t" style="left:816px;top:678px;color:#222">Соломахин Руслан</div>
<div class="a" style="left:444px;top:768px;width:0;height:0;border-top:3px solid transparent;border-bottom:3px solid transparent;border-right:4px solid #c8c8c8"></div>
<div class="a" style="left:457px;top:767px;width:579px;height:8px;border-radius:4px;background:#d6d6d6"></div>
<div class="a" style="left:457px;top:767px;width:549px;height:8px;border-radius:4px;background:#9a9a9a"></div>
<div class="a" style="left:1046px;top:768px;width:0;height:0;border-top:3px solid transparent;border-bottom:3px solid transparent;border-left:4px solid #444"></div>
<!-- BOTTOM-END -->
<!-- OVER-BEGIN -->
<div class="a" style="left:430px;top:609px;width:633px;height:98px;box-sizing:border-box;border:4.5px solid #e33a2f;border-radius:9px;box-shadow:1px 1px 2px rgba(0,0,0,.25)"></div>
<svg class="a" style="left:290px;top:535px;filter:drop-shadow(1px 1.5px 1.2px rgba(0,0,0,.35))" width="150" height="110" viewBox="290 535 150 110"><path d="M299.6 631.2 L408 551.2 L399 544 L424.8 546.6 L417.6 571.6 L413.4 563.4 L301.6 634.2 Q299 635 299.6 631.2Z" fill="#e33a2f"/></svg>
<!-- OVER-END -->
</body></html>
